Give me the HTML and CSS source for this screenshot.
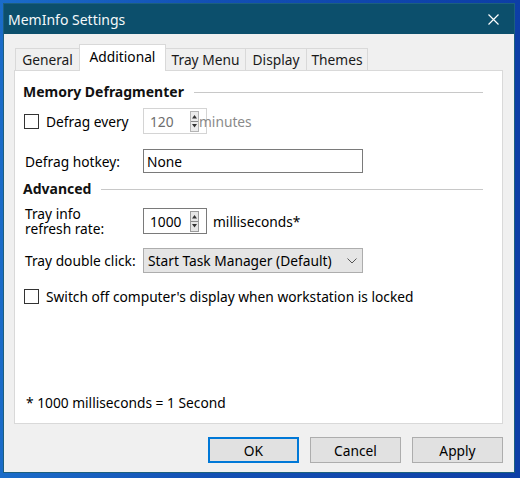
FILE: index.html
```html
<!DOCTYPE html>
<html lang="en">
<head>
  <meta charset="UTF-8">
  <title>MemInfo Settings</title>
  <link rel="stylesheet" href="styles.css">
</head>
<body>
  <div class="window">
    <div class="titlebar">
      <span class="title">MemInfo Settings</span>
      <svg class="close" width="11" height="11" viewBox="0 0 11 11">
        <path d="M0.5 0.5 L10.5 10.5 M10.5 0.5 L0.5 10.5" stroke="#fff" stroke-width="1.2" fill="none"/>
      </svg>
    </div>

    <div class="client">
      <div class="tabs">
        <div class="tab tab-general">General</div>
        <div class="tab tab-additional active">Additional</div>
        <div class="tab tab-tray">Tray Menu</div>
        <div class="tab tab-display">Display</div>
        <div class="tab tab-themes">Themes</div>
      </div>

      <div class="panel">
        <div class="group-title">
          <span>Memory Defragmenter</span>
          <div class="rule"></div>
        </div>

        <div class="row row-defrag">
          <label class="checkline">
            <span class="check"></span>
            <span>Defrag every</span>
          </label>
          <div class="spinner disabled">
            <span class="spin-value">120</span>
            <span class="spin-btn">
              <svg width="7" height="19" viewBox="0 0 7 19">
                <path d="M3.5 3 L6 6.5 L1 6.5 Z M3.5 15.5 L6 12 L1 12 Z" fill="#333"/>
                <path d="M0 9.5 H7" stroke="#8a8a8a" stroke-width="1"/>
              </svg>
            </span>
          </div>
          <span class="unit unit-muted">minutes</span>
        </div>

        <div class="row row-hotkey">
          <span class="label">Defrag hotkey:</span>
          <div class="textbox">None</div>
        </div>

        <div class="group-title group-advanced">
          <span>Advanced</span>
          <div class="rule"></div>
        </div>

        <div class="row row-refresh">
          <div class="label label-two">
            <span>Tray info</span>
            <span>refresh rate:</span>
          </div>
          <div class="spinner">
            <span class="spin-value">1000</span>
            <span class="spin-btn">
              <svg width="7" height="19" viewBox="0 0 7 19">
                <path d="M3.5 3 L6 6.5 L1 6.5 Z M3.5 15.5 L6 12 L1 12 Z" fill="#333"/>
                <path d="M0 9.5 H7" stroke="#8a8a8a" stroke-width="1"/>
              </svg>
            </span>
          </div>
          <span class="unit">milliseconds*</span>
        </div>

        <div class="row row-dblclick">
          <span class="label">Tray double click:</span>
          <div class="dropdown">
            <span>Start Task Manager (Default)</span>
            <svg width="10" height="6" viewBox="0 0 10 6">
              <path d="M0.5 0.5 L5 5 L9.5 0.5" stroke="#555" stroke-width="1" fill="none"/>
            </svg>
          </div>
        </div>

        <label class="checkline row-lock">
          <span class="check"></span>
          <span>Switch off computer's display when workstation is locked</span>
        </label>

        <div class="footnote">* 1000 milliseconds = 1 Second</div>
      </div>

      <div class="buttons">
        <button class="btn btn-default">OK</button>
        <button class="btn">Cancel</button>
        <button class="btn">Apply</button>
      </div>
    </div>
  </div>
</body>
</html>
```

FILE: styles.css
```css
body {
  margin: 0;
  width: 520px;
  height: 478px;
  overflow: hidden;
  background: linear-gradient(90deg, #1a6cc9 0%, #1350b4 40%, #0d3ea6 100%);
  font-family: "Noto Sans", "Open Sans", Arial, sans-serif;
  font-size: 13.75px;
  color: #000;
}
.window {
  margin: 3px 0 0 3px;
  width: 512px;
  height: 470px;
  box-sizing: border-box;
  border: 1px solid #1c5f7e;
  background: #f0f0f0;
  display: flex;
  flex-direction: column;
}
.titlebar {
  height: 30px;
  flex: none;
  background: #0c4f6c;
  color: #f4f8fa;
  display: flex;
  align-items: center;
  justify-content: space-between;
  padding: 0 15px 0 4px;
}
.title {
  font-size: 14px;
}
.close {
  margin-top: 1px;
}
.client {
  flex: 1;
  padding: 10px 11px 0 10px;
}
/* tab strip */
.tabs {
  display: flex;
  align-items: flex-end;
  height: 26px;
  padding-left: 1px;
}
.tab {
  height: 22px;
  box-sizing: border-box;
  border: 1px solid #d9d9d9;
  border-bottom: none;
  margin-left: -1px;
  background: #f0f0f0;
  display: flex;
  align-items: center;
  justify-content: center;
  color: #1a1a1a;
  white-space: nowrap;
}
.tab:first-child {
  margin-left: 0;
}
.tab-general { width: 65px; }
.tab-additional { width: 87px; }
.tab-tray { width: 81px; }
.tab-display { width: 62px; }
.tab-themes { width: 62px; }
.tab.active {
  height: 27px;
  background: #fff;
  position: relative;
  z-index: 1;
  margin-bottom: -1px;
  align-items: flex-start;
  padding-top: 2px;
  color: #000;
}
/* page body */
.panel {
  height: 354px;
  box-sizing: border-box;
  background: #fff;
  border: 1px solid #d9d9d9;
  padding: 11px 19px 11px 8px;
  display: flex;
  flex-direction: column;
}
.group-title {
  display: flex;
  align-items: center;
  height: 18px;
  font-weight: bold;
  font-size: 14px;
  color: #111;
}
.group-title .rule {
  flex: 1;
  height: 1px;
  background: #c8c8c8;
  margin-left: 10px;
  margin-top: 2px;
}
.group-advanced {
  margin-top: 6px;
}
.row {
  display: flex;
  align-items: center;
  padding-left: 2px;
}
.row-defrag { margin-top: 8px; }
.row-hotkey { margin-top: 15px; }
.row-refresh { margin-top: 9px; }
.row-dblclick { margin-top: 12px; }
.label {
  width: 118px;
  flex: none;
  white-space: nowrap;
}
.label-two {
  display: flex;
  flex-direction: column;
}
.label-two span {
  height: 15px;
  line-height: 15px;
}
.checkline {
  display: flex;
  align-items: center;
  width: 119px;
  flex: none;
  margin-left: -1px;
  white-space: nowrap;
}
.check {
  width: 13px;
  height: 13px;
  border: 1px solid #333;
  background: #fff;
  margin-right: 7px;
  flex: none;
}
.row-lock {
  width: auto;
  margin-top: 13px;
  padding-left: 2px;
  height: 20px;
}
.spinner {
  width: 64px;
  height: 26px;
  box-sizing: border-box;
  border: 1px solid #7a7a7a;
  display: flex;
  align-items: center;
  justify-content: space-between;
  padding: 0 7px 0 6px;
}
.spinner.disabled {
  border-color: #d4d4d4;
  color: #6d6d6d;
}
.spinner.disabled .spin-btn {
  border-color: #b4b4b4;
  background: #ececec;
}
.spin-btn {
  width: 7px;
  height: 19px;
  border: 1px solid #9a9a9a;
  background: #e6e6e6;
  display: flex;
}
.unit {
  margin-left: 6px;
}
.unit-muted {
  color: #8a8a8a;
  margin-left: -8px;
}
.textbox {
  width: 220px;
  height: 24px;
  box-sizing: border-box;
  border: 1px solid #7a7a7a;
  display: flex;
  align-items: center;
  padding-left: 3px;
}
.dropdown {
  width: 220px;
  height: 25px;
  box-sizing: border-box;
  border: 1px solid #adadad;
  background: #e5e5e5;
  display: flex;
  align-items: center;
  justify-content: space-between;
  padding: 0 5px 0 4px;
}
.footnote {
  margin-top: auto;
  height: 18px;
  line-height: 18px;
  padding-left: 3px;
}
/* dialog buttons */
.buttons {
  display: flex;
  justify-content: flex-end;
  gap: 11px;
  margin-top: 13px;
}
.btn {
  width: 91px;
  height: 26px;
  box-sizing: border-box;
  border: 1px solid #adadad;
  background: #e1e1e1;
  font-family: inherit;
  font-size: 13.75px;
  color: #000;
  padding: 0;
}
.btn-default {
  border: 2px solid #0078d7;
}
```
